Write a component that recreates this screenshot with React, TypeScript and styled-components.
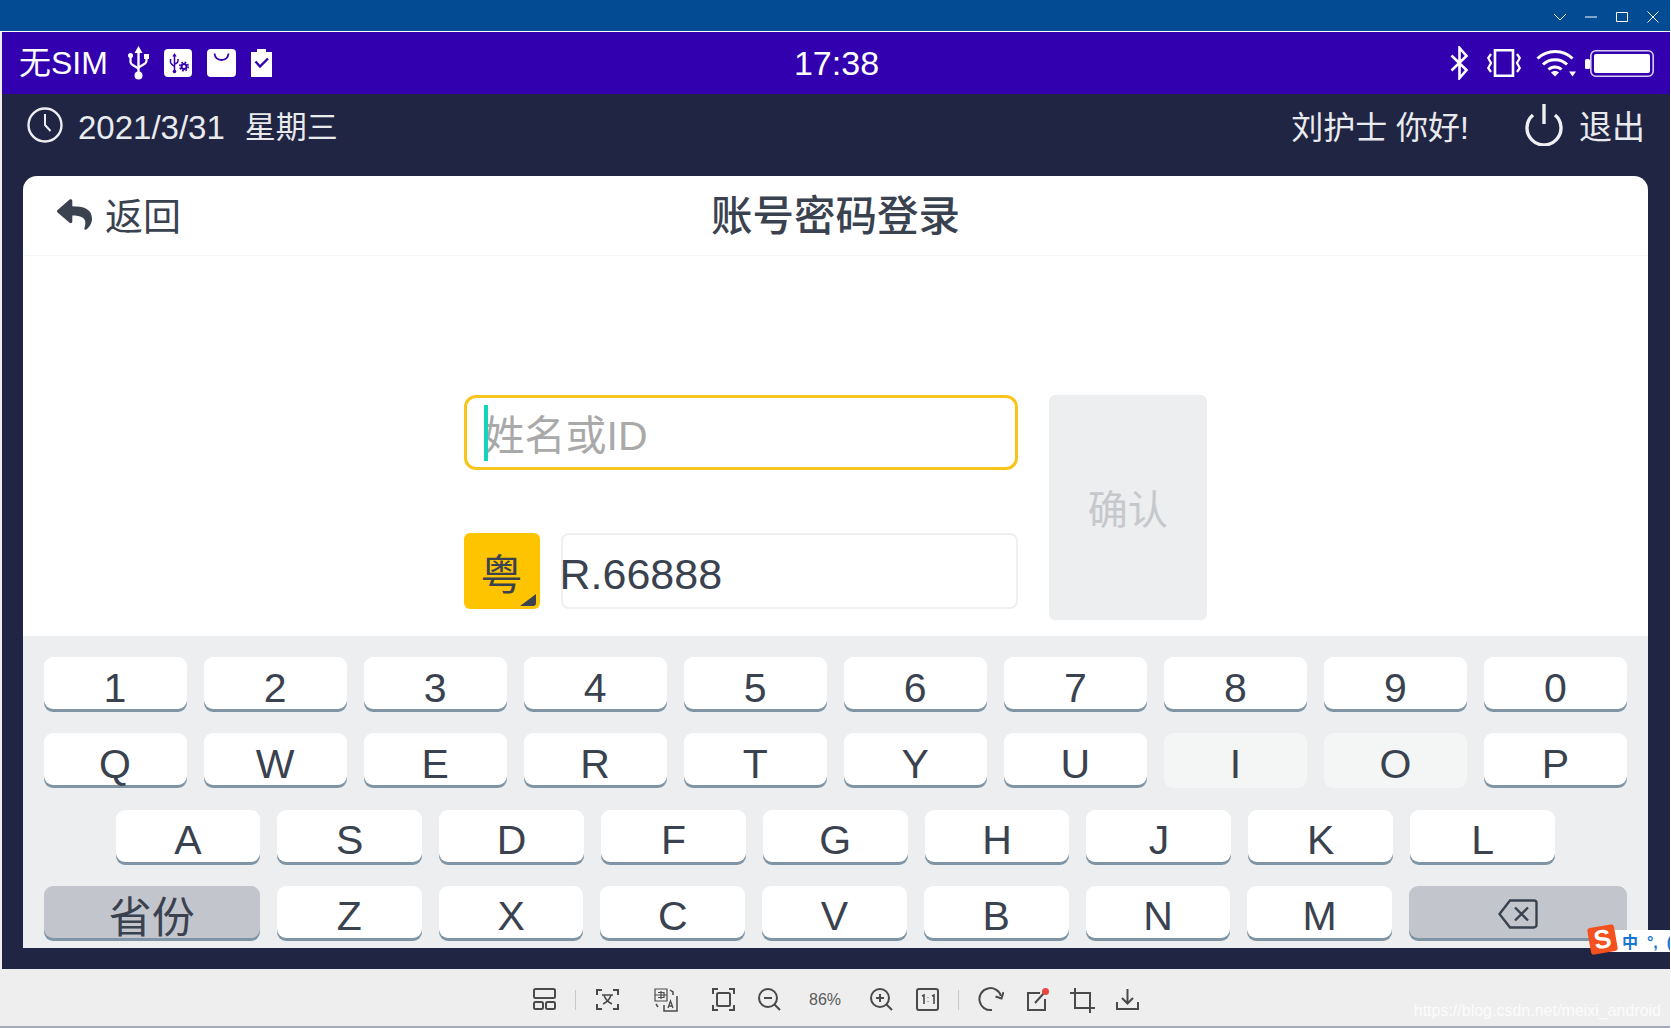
import React, { FC } from "react";
import styled, { createGlobalStyle } from "styled-components";
import { FaReply } from "react-icons/fa";

const SANS = `"Liberation Sans", "Noto Sans CJK SC", sans-serif`;
const DARK_TEXT = "#3a4250";

const GlobalStyle = createGlobalStyle`
  html, body {
    margin: 0;
    padding: 0;
    background: #ffffff;
  }
  body {
    font-family: ${SANS};
    overflow: hidden;
  }
  * {
    box-sizing: border-box;
  }
`;

const Window = styled.div`
  position: relative;
  width: 1670px;
  height: 1028px;
  display: flex;
  flex-direction: column;
  overflow: hidden;
  background: #eeeeee;
`;

const TitleBar = styled.div`
  height: 32px;
  flex: none;
  display: flex;
  justify-content: flex-end;
  align-items: center;
  gap: 17px;
  padding: 2px 10px 0 0;
  background: #034b92;
  border-bottom: 1px solid #ffffff;
`;

const StatusBar = styled.div`
  height: 62px;
  flex: none;
  margin-left: 2px;
  display: grid;
  grid-template-columns: 1fr auto 1fr;
  align-items: center;
  padding: 0 16px 0 17px;
  background: #3300b0;
  color: #ffffff;
`;

const StatusGroup = styled.div<{ $end?: boolean }>`
  display: flex;
  align-items: center;
  justify-content: ${p => (p.$end ? "flex-end" : "flex-start")};
`;

const SimLabel = styled.span`
  font-size: 32px;
  line-height: 62px;
  margin-right: 20px;
`;

const Clock = styled.span`
  font-size: 34px;
  line-height: 62px;
`;

const StatusIcon = styled.svg<{ $left?: number }>`
  display: block;
  flex: none;
  margin-left: ${p => p.$left ?? 0}px;
`;

const AppBody = styled.div`
  flex: 1;
  margin-left: 2px;
  display: flex;
  flex-direction: column;
  background: #1f2542;
  padding: 0 22px 21px 21px;
`;

const InfoBar = styled.div`
  height: 82px;
  flex: none;
  display: flex;
  align-items: center;
  justify-content: space-between;
  padding: 0 3px 20px 4px;
  color: #e9eaee;
`;

const InfoGroup = styled.div`
  display: flex;
  align-items: center;
`;

const InfoText = styled.span<{ $left?: number; $right?: number; $size: number }>`
  margin-left: ${p => p.$left ?? 0}px;
  margin-right: ${p => p.$right ?? 0}px;
  padding-top: 5px;
  font-size: ${p => p.$size}px;
  line-height: 44px;
  white-space: pre;
`;

const Card = styled.div`
  flex: 1;
  display: flex;
  flex-direction: column;
  background: #ffffff;
  border-radius: 14px 14px 0 0;
  overflow: hidden;
`;

const CardHeader = styled.header`
  height: 80px;
  flex: none;
  display: grid;
  grid-template-columns: 1fr auto 1fr;
  align-items: center;
  padding: 0 34px;
  border-bottom: 1px solid #f4f5f5;
  color: ${DARK_TEXT};
`;

const BackLink = styled.div`
  display: flex;
  align-items: center;
  gap: 13px;
  font-size: 38px;
  line-height: 76px;
  svg {
    display: block;
    margin-bottom: 2px;
  }
`;

const BackLabel = styled.span`
  padding-top: 3px;
`;

const Title = styled.h1`
  margin: 0;
  padding-top: 3px;
  font-size: 41.5px;
  font-weight: 500;
  line-height: 76px;
`;

const Form = styled.div`
  flex: 1;
  display: grid;
  grid-template-columns: 554.5px 158.5px;
  column-gap: 30.5px;
  align-content: start;
  padding: 139px 0 0 440.5px;
`;

const Fields = styled.div`
  display: flex;
  flex-direction: column;
  gap: 63px;
`;

const NameInput = styled.div`
  position: relative;
  height: 75px;
  display: flex;
  align-items: center;
  padding: 0 0 2px 17px;
  border: 3px solid #f7c51e;
  border-radius: 12px;
  color: #a9a9a9;
  font-size: 41px;
`;

const Caret = styled.span`
  position: absolute;
  left: 17px;
  top: 7px;
  width: 4px;
  height: 56px;
  background: #14d3ba;
`;

const PlateRow = styled.div`
  display: flex;
  gap: 21px;
`;

const Province = styled.div`
  position: relative;
  width: 76px;
  height: 76px;
  flex: none;
  display: flex;
  align-items: center;
  justify-content: center;
  border-radius: 6px;
  background: #ffc400;
  color: ${DARK_TEXT};
  font-size: 42px;
`;

const ProvinceCorner = styled.svg`
  position: absolute;
  right: 4px;
  bottom: 3px;
`;

const PlateInput = styled.div`
  flex: 1;
  height: 76px;
  display: flex;
  align-items: center;
  padding-top: 6px;
  text-indent: -3px;
  border: 2px solid #eef0f0;
  border-radius: 8px;
  color: ${DARK_TEXT};
  font-size: 43px;
`;

const ConfirmButton = styled.div`
  height: 225px;
  display: flex;
  align-items: center;
  justify-content: center;
  padding-bottom: 1px;
  border-radius: 6px;
  background: #eceeef;
  color: #c6c8cc;
  font-size: 40px;
`;

const Keyboard = styled.div`
  height: 312px;
  flex: none;
  display: flex;
  flex-direction: column;
  gap: 24.3px;
  padding: 21px 21px 0 20.5px;
  background: #eceeef;
`;

const KeyRow = styled.div<{ $inset?: number }>`
  display: flex;
  gap: 17px;
  padding: 0 ${p => p.$inset ?? 0}px;
`;

const Key = styled.div<{ $width?: number; $grey?: boolean; $faded?: boolean }>`
  flex: ${p => (p.$width ? `0 0 ${p.$width}px` : "1 1 0")};
  height: 52px;
  display: flex;
  align-items: center;
  justify-content: center;
  padding-top: ${p => (p.$width ? 4 : 10)}px;
  border-radius: 9px;
  background: ${p => (p.$grey ? "#c3c5cc" : p.$faded ? "#f4f5f5" : "#ffffff")};
  box-shadow: ${p => (p.$faded ? "0 3px 0 #f4f5f5" : "0 3px 0 #7f94a4")};
  color: ${DARK_TEXT};
  font-size: ${p => (p.$width ? 43 : 41)}px;
`;

const Toolbar = styled.div`
  height: 59px;
  flex: none;
  display: flex;
  align-items: center;
  padding: 5px 0 0 533px;
  border-bottom: 2px solid #a5a8bd;
  background: #eeeeee;
  color: #4a4a4a;
`;

const ToolSlot = styled.div<{ $left: number }>`
  flex: none;
  margin-left: ${p => p.$left}px;
  svg {
    display: block;
  }
`;

const ToolDivider = styled.div<{ $left: number }>`
  flex: none;
  width: 1px;
  height: 20px;
  margin-left: ${p => p.$left}px;
  background: #c9c9c9;
`;

const ZoomValue = styled.span<{ $left: number }>`
  margin-left: ${p => p.$left}px;
  width: 33px;
  font-size: 16px;
  color: #5a5a5a;
`;

const Watermark = styled.div`
  position: absolute;
  right: 9px;
  bottom: 8px;
  font-size: 16px;
  color: #ffffff;
  opacity: 0.8;
`;

const ImeBar = styled.div`
  position: absolute;
  left: 1600px;
  top: 930px;
  width: 70px;
  height: 22px;
  display: flex;
  align-items: center;
  padding-left: 22px;
  background: #ffffff;
  color: #1576d2;
  font-size: 16px;
  font-weight: 700;
  white-space: pre;
`;

const ImeLogo = styled.div`
  position: absolute;
  left: 1589px;
  top: 926px;
  width: 27px;
  height: 27px;
  display: flex;
  align-items: center;
  justify-content: center;
  border-radius: 3px;
  transform: rotate(-10deg);
  background: #f4511e;
  color: #ffffff;
  font-size: 26px;
  font-weight: 700;
`;

const UsbIcon: FC = () => (
  <StatusIcon width="21" height="34" viewBox="0 0 21 34" fill="none">
    <path d="M10.5 0l4 7h-8z" fill="#fff" />
    <path d="M10.5 6v24" stroke="#fff" strokeWidth="2.4" />
    <circle cx="10.5" cy="29.5" r="4" fill="#fff" />
    <path d="M2.5 10v5.5c0 2 1 3 3 4l5 3M18.5 12v2.5c0 2-1 3-3 4l-5 3" stroke="#fff" strokeWidth="2.2" />
    <circle cx="2.5" cy="9.5" r="2.5" fill="#fff" />
    <rect x="16" y="8" width="5" height="5" fill="#fff" />
  </StatusIcon>
);

const UsbSettingsIcon: FC = () => (
  <StatusIcon $left={15} width="28" height="28" viewBox="0 0 28 28">
    <rect width="28" height="28" rx="4" fill="#fff" />
    <g fill="none" stroke="#3300b0" strokeWidth="1.5">
      <path d="M10.5 7v15M6.5 10v3c0 1.500 1 2 2 3l2 1.500M14 10v2c0 1.500-1 2-2 2.500l-1.500 1" />
      <circle cx="20" cy="17.500" r="2.500" strokeWidth="2" />
      <circle cx="20" cy="17.500" r="4.200" strokeDasharray="1.800 1.500" strokeWidth="1.600" />
    </g>
    <path d="M10.500 4l2.200 3.500h-4.400z" fill="#3300b0" />
    <circle cx="10.500" cy="22.500" r="1.800" fill="#3300b0" />
  </StatusIcon>
);

const BagIcon: FC = () => (
  <StatusIcon $left={15} width="29" height="28" viewBox="0 0 29 28">
    <rect width="29" height="28" rx="4" fill="#fff" />
    <path d="M7.500 4.500c.5 4 3 6.500 7 6.500s6.500-2.500 7-6.500" fill="none" stroke="#3300b0" strokeWidth="1.800" />
  </StatusIcon>
);

const ClipboardIcon: FC = () => (
  <StatusIcon $left={15} width="21" height="28" viewBox="0 0 21 28">
    <path d="M0 3h6V0h9v3h6v25H0z" fill="#fff" />
    <path d="M4.500 12.500l4.500 5 8-8" fill="none" stroke="#3300b0" strokeWidth="2.400" />
  </StatusIcon>
);

const BluetoothIcon: FC = () => (
  <StatusIcon width="19" height="34" viewBox="0 0 19 34" fill="none">
    <path d="M1.500 9.500l15 14.500-7 8V2l7 8-15 14.500" stroke="#fff" strokeWidth="2.600" />
  </StatusIcon>
);

const VibrateIcon: FC = () => (
  <StatusIcon $left={18} width="34" height="28" viewBox="0 0 34 28" fill="none" stroke="#fff">
    <rect x="8" y="1.200" width="18" height="25.600" strokeWidth="2.600" />
    <path d="M4 5L1.200 9 4 14l-2.800 5L4 23M30 5l2.800 4L30 14l2.800 5L30 23" strokeWidth="2.200" />
  </StatusIcon>
);

const WifiIcon: FC = () => (
  <StatusIcon $left={15} width="40" height="28" viewBox="0 0 40 28" fill="none" stroke="#fff" strokeWidth="3">
    <path d="M1.500 9.500c9.500-9.500 26-9.500 35 0" />
    <path d="M7 15.500c6.500-6.500 17.500-6.500 24 0" />
    <path d="M12.500 20.500c3.500-3.500 9.500-3.500 13 0" />
    <path d="M19 27.500l-4-4c2-2 6-2 8 0z" fill="#fff" stroke="none" />
    <path d="M33 22.500h7l-3.500 5z" fill="#fff" stroke="none" />
  </StatusIcon>
);

const BatteryIcon: FC = () => (
  <StatusIcon $left={9} width="69" height="27" viewBox="0 0 69 27" fill="none">
    <rect x="0" y="9" width="5" height="10" rx="1.500" fill="#fff" />
    <rect x="5.800" y=".8" width="62.400" height="25.400" rx="5" stroke="#d8cdf0" strokeWidth="1.600" />
    <rect x="9" y="4" width="56" height="19" rx="2" fill="#fff" />
  </StatusIcon>
);

const WINDOW_ICONS = [
  "M1 4l6 6 6-6",
  "M1 7h12",
  "M1.500 2.500h11v9h-11z",
  "M1.500 1.500l11 11M12.500 1.500l-11 11",
];

const ClockIcon: FC = () => (
  <svg width="36" height="36" viewBox="0 0 36 36" fill="none" stroke="#eceef2">
    <circle cx="18" cy="18" r="16.500" strokeWidth="2.400" />
    <path d="M18 7v11l5.500 6" strokeWidth="2" />
  </svg>
);

const PowerIcon: FC = () => (
  <svg width="38" height="42" viewBox="0 0 38 42" fill="none" stroke="#eef0f4" strokeWidth="3.400">
    <path d="M19 0v20" />
    <path d="M8 11a17 17 0 1 0 22 0" />
  </svg>
);

const BackspaceIcon: FC = () => (
  <svg width="40" height="30" viewBox="0 0 40 30" fill="none" stroke={DARK_TEXT} strokeWidth="2.400">
    <path d="M12 1.500h24a2.500 2.500 0 0 1 2.500 2.500v22a2.500 2.500 0 0 1-2.500 2.500H12L1.500 15z" />
    <path d="M17 8.500l13 13M30 8.500l-13 13" />
  </svg>
);

const TOOLS = [
  {
    left: 0,
    w: 23,
    node: (
      <>
        <rect x="1" y="1" width="21" height="9" rx="1.500" />
        <rect x="1" y="14" width="9" height="7" rx="1.500" />
        <rect x="13" y="14" width="9" height="7" rx="1.500" />
      </>
    ),
  },
  { divider: 19 },
  {
    left: 20,
    w: 23,
    node: (
      <>
        <path d="M1 7V2h5M17 2h5v5M1 16v5h5M17 21h5v-5" />
        <path d="M6 7h11M8 7c1 4 4 7 8 9M15 7c-1 4-4 7-8 9" strokeWidth="1.500" />
      </>
    ),
  },
  {
    left: 35,
    w: 24,
    node: (
      <>
        <path d="M1 1h12v12H1zM1 7h12M7 3v8M4 4.500h6v5H4" strokeWidth="1.200" />
        <path d="M16 2l3 2v3M23 8v15H10v-6M2 16l2 3" strokeWidth="1.500" />
        <path d="M14 20l2.500-7 2.500 7M15 18h3" strokeWidth="1.300" />
      </>
    ),
  },
  {
    left: 34,
    w: 23,
    node: (
      <>
        <path d="M1 6V1h5M17 1h5v5M1 17v5h5M17 22h5v-5" />
        <rect x="5" y="5" width="13" height="13" rx="1.500" />
      </>
    ),
  },
  {
    left: 23,
    w: 23,
    node: (
      <>
        <circle cx="10" cy="10" r="9" />
        <path d="M6 10h8M16.500 16.500L22 22" />
      </>
    ),
  },
  { zoom: 28 },
  {
    left: 28,
    w: 23,
    node: (
      <>
        <circle cx="10" cy="10" r="9" />
        <path d="M6 10h8M10 6v8M16.500 16.500L22 22" />
      </>
    ),
  },
  {
    left: 23,
    w: 23,
    node: (
      <>
        <rect x="1" y="1" width="21" height="21" rx="2" />
        <path d="M6 8l2-1v9M16 8l2-1v9M12 9.500v.5M12 13.500v.5" strokeWidth="1.600" />
      </>
    ),
  },
  { divider: 19 },
  {
    left: 18,
    w: 27,
    node: (
      <>
        <path d="M24 8a11 11 0 1 0-9 14" />
        <path d="M18.500 8.500l6 2 2-6.500" />
      </>
    ),
  },
  {
    left: 22,
    w: 24,
    node: (
      <>
        <path d="M14 5H2v17h17V11" />
        <path d="M9 15l9-10" />
        <circle cx="19.500" cy="3.500" r="3.500" fill="#e8483f" stroke="none" />
      </>
    ),
  },
  {
    left: 20,
    w: 26,
    node: (
      <path d="M5 0v20h20M0 5h20v20" />
    ),
  },
  {
    left: 20,
    w: 23,
    node: (
      <path d="M1 14v7h21v-7M11.500 1v14M6 10l5.500 5.500L17 10" />
    ),
  },
];

const KEY_ROWS = {
  numbers: "1234567890".split(""),
  top: "QWERTYUIOP".split(""),
  home: "ASDFGHJKL".split(""),
  bottom: "ZXCVBNM".split(""),
};

const App: FC = () => (
  <Window>
    <GlobalStyle />
    <TitleBar>
      {WINDOW_ICONS.map(d => (
        <svg key={d} width="14" height="14" viewBox="0 0 14 14" fill="none" stroke="#fff" strokeWidth="1">
          <path d={d} />
        </svg>
      ))}
    </TitleBar>
    <StatusBar>
      <StatusGroup>
        <SimLabel>无SIM</SimLabel>
        <UsbIcon />
        <UsbSettingsIcon />
        <BagIcon />
        <ClipboardIcon />
      </StatusGroup>
      <Clock>17:38</Clock>
      <StatusGroup $end>
        <BluetoothIcon />
        <VibrateIcon />
        <WifiIcon />
        <BatteryIcon />
      </StatusGroup>
    </StatusBar>
    <AppBody>
      <InfoBar>
        <InfoGroup>
          <ClockIcon />
          <InfoText $left={15} $size={33}>2021/3/31</InfoText>
          <InfoText $left={20} $size={31}>星期三</InfoText>
        </InfoGroup>
        <InfoGroup>
          <InfoText $right={56} $size={32}>刘护士 你好!</InfoText>
          <PowerIcon />
          <InfoText $left={16} $size={33}>退出</InfoText>
        </InfoGroup>
      </InfoBar>
      <Card>
        <CardHeader>
          <BackLink>
            <FaReply size={35} />
            <BackLabel>返回</BackLabel>
          </BackLink>
          <Title>账号密码登录</Title>
        </CardHeader>
        <Form>
          <Fields>
            <NameInput>
              <Caret />
              姓名或ID
            </NameInput>
            <PlateRow>
              <Province>
                粤
                <ProvinceCorner width="16" height="12" viewBox="0 0 16 12">
                  <path d="M16 0v9a3 3 0 0 1-3 3H0z" fill="#3a4250" />
                </ProvinceCorner>
              </Province>
              <PlateInput>R.66888</PlateInput>
            </PlateRow>
          </Fields>
          <ConfirmButton>确认</ConfirmButton>
        </Form>
        <Keyboard>
          <KeyRow>
            {KEY_ROWS.numbers.map(k => (
              <Key key={k}>{k}</Key>
            ))}
          </KeyRow>
          <KeyRow>
            {KEY_ROWS.top.map(k => (
              <Key key={k} $faded={k === "I" || k === "O"}>
                {k}
              </Key>
            ))}
          </KeyRow>
          <KeyRow $inset={72}>
            {KEY_ROWS.home.map(k => (
              <Key key={k}>{k}</Key>
            ))}
          </KeyRow>
          <KeyRow>
            <Key $width={216.5} $grey>
              省份
            </Key>
            {KEY_ROWS.bottom.map(k => (
              <Key key={k}>{k}</Key>
            ))}
            <Key $width={218} $grey>
              <BackspaceIcon />
            </Key>
          </KeyRow>
        </Keyboard>
      </Card>
    </AppBody>
    <Toolbar>
      {TOOLS.map((t, i) => {
        if (t.divider !== undefined) return <ToolDivider key={i} $left={t.divider} />;
        if (t.zoom !== undefined) return <ZoomValue key={i} $left={t.zoom}>86%</ZoomValue>;
        return (
          <ToolSlot key={i} $left={t.left ?? 0}>
            <svg width={t.w} height="26" viewBox={`0 -1 ${t.w} 26`} fill="none" stroke="#4a4a4a" strokeWidth="2">
              {t.node}
            </svg>
          </ToolSlot>
        );
      })}
    </Toolbar>
    <Watermark>https://blog.csdn.net/meixi_android</Watermark>
    <ImeBar>{"中  °,  ("}</ImeBar>
    <ImeLogo>S</ImeLogo>
  </Window>
);

export default App;
